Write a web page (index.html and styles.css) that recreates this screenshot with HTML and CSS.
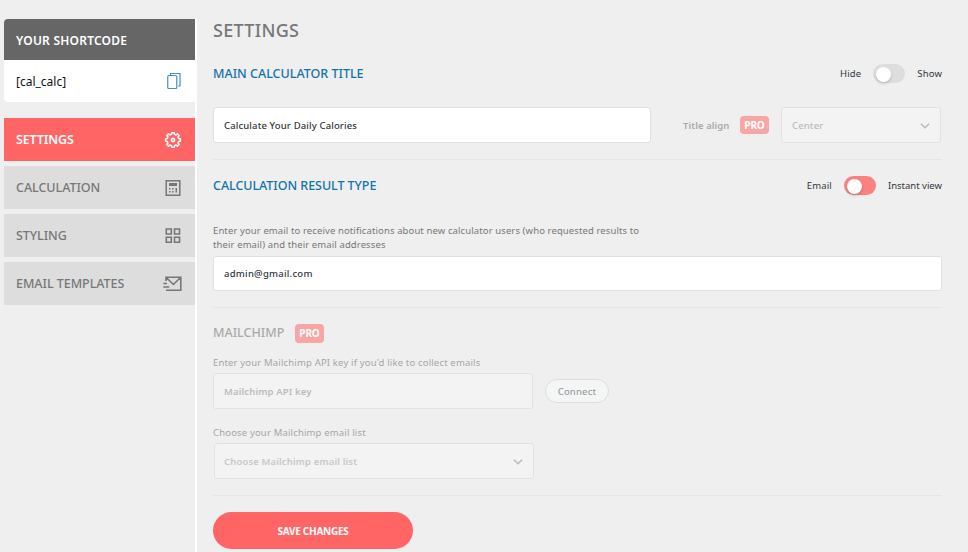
FILE: index.html
```html
<!DOCTYPE html>
<html lang="en">
<head>
<meta charset="utf-8">
<title>Settings</title>
<link rel="stylesheet" href="styles.css">
</head>
<body>
<div class="page">
  <aside class="sidebar">
    <section class="shortcode">
      <h2 class="shortcode-title"><span>YOUR SHORTCODE</span></h2>
      <div class="shortcode-body">
        <span>[cal_calc]</span>
        <svg width="14" height="18" viewBox="0 0 14 18" fill="none" stroke="#4a8cc8" stroke-width="1.200"><path d="M3.500 3V1.500h9.500v12.500h-2"/><rect x=".75" y="3.500" width="9" height="13" rx="1"/></svg>
      </div>
    </section>
    <nav class="nav">
      <a class="nav-item active"><span>SETTINGS</span>
        <svg width="18" height="18" viewBox="-9 -9 18 18" fill="none" stroke="currentColor" stroke-width="1.600" stroke-linejoin="round"><path d="M-1.170-7.300 1.170-7.300 1.550-5.700 3-5.100 4.410-6.070 6.070-4.410 5.100-3 5.700-1.550 7.300-1.170 7.300 1.170 5.700 1.550 5.100 3 6.070 4.410 4.410 6.070 3 5.100 1.550 5.700 1.170 7.300-1.170 7.300-1.550 5.700-3 5.100-4.410 6.070-6.070 4.410-5.100 3-5.700 1.550-7.300 1.170-7.300-1.170-5.700-1.550-5.100-3-6.070-4.410-4.410-6.070-3-5.100-1.550-5.700z"/><circle r="1.600"/></svg></a>
      <a class="nav-item"><span>CALCULATION</span>
        <svg width="18" height="18" viewBox="0 0 18 18" fill="currentColor"><path d="M2.200 1.700h13.600v14.600H2.200z" fill="none" stroke="currentColor" stroke-width="1.500"/><path d="M5 4h8v3H5zM5 9h1.500v1.500H5zM8 9h1.500v1.500H8zM5 12h1.500v1.500H5zM8 12h1.500v1.500H8zM11.500 9H13v4.500h-1.500z"/></svg></a>
      <a class="nav-item"><span>STYLING</span>
        <svg width="18" height="18" viewBox="0 0 18 18" fill="none" stroke="currentColor" stroke-width="1.600"><path d="M2.300 2h5v5h-5zM10.500 2h5v5h-5zM2.300 10.300h5v5h-5zM10.500 10.300h5v5h-5z"/></svg></a>
      <a class="nav-item"><span>EMAIL TEMPLATES</span>
        <svg width="19" height="18" viewBox="0 0 19 18" fill="none" stroke="currentColor" stroke-width="1.600"><path d="M3 6V2.300h14.800v13H3M3 2.300l7.400 7.200 7.400-7.200M.3 8.500H4M.3 12h6"/></svg></a>
    </nav>
  </aside>
  <main class="main">
    <h1 class="title"><span>SETTINGS</span></h1>
    <section class="title-block">
      <div class="head head-first">
        <h2>MAIN CALCULATOR TITLE</h2>
        <div class="switch-row"><span>Hide</span><i class="switch"></i><span>Show</span></div>
      </div>
      <div class="fields">
        <div class="field f-title"><span>Calculate Your Daily Calories</span></div>
        <span class="align-label">Title align</span>
        <b class="pro pro-up">PRO</b>
        <div class="field select off f-center"><span>Center</span><svg width="10" height="7" viewBox="0 0 10 7" fill="none" stroke="#bbb" stroke-width="1.500"><path d="M.9 1.700 5 5.800l4.100-4.100"/></svg></div>
      </div>
    </section>
    <section class="result-block">
      <div class="head head-result">
        <h2 class="h-result">CALCULATION RESULT TYPE</h2>
        <div class="switch-row"><span>Email</span><i class="switch on"></i><span class="instant">Instant view</span></div>
      </div>
      <p class="desc"><span>Enter your email to receive notifications about new calculator users (who requested results to</span><br><span>their email) and their email addresses</span></p>
      <div class="field f-email"><span>admin@gmail.com</span></div>
    </section>
    <section class="chimp-block">
      <div class="chimp-head"><h2 class="h-chimp">MAILCHIMP</h2><b class="pro">PRO</b></div>
      <p class="label"><span>Enter your Mailchimp API key if you'd like to collect emails</span></p>
      <div class="api-row">
        <div class="field off f-api"><span>Mailchimp API key</span></div>
        <span class="connect"><span>Connect</span></span>
      </div>
      <p class="label second"><span>Choose your Mailchimp email list</span></p>
      <div class="field select off f-list"><span>Choose Mailchimp email list</span><svg width="10" height="7" viewBox="0 0 10 7" fill="none" stroke="#bbb" stroke-width="1.500"><path d="M.9 1.700 5 5.800l4.100-4.100"/></svg></div>
    </section>
    <button class="save"><span>SAVE CHANGES</span></button>
  </main>
</div>
</body>
</html>
```
FILE: styles.css
```css
* { box-sizing: border-box; }
body { margin: 0; background: #efefef; font-family: "Noto Sans", "Open Sans", sans-serif; font-size: 9.500px; letter-spacing: .14px; color: #32373c; overflow: hidden; }
h1, h2, p { margin: 0; font-weight: 500; }
span { white-space: nowrap; }
svg { display: block; flex: none; }
.page { display: flex; height: 552px; padding: 19px 0 0 4px; }
.sidebar { width: 191px; flex: none; letter-spacing: 0; }
.shortcode { height: 83px; border-radius: 4px 0 0 4px; overflow: hidden; background: #fff; }
.shortcode-title { height: 41px; display: flex; align-items: center; padding: 1px 12px 0; background: #666; color: #fff; font-size: 12px; font-weight: 600; letter-spacing: .23px; }
.shortcode-body { height: 42px; display: flex; align-items: center; justify-content: space-between; padding: 0 14px 0 12px; color: #111; font-size: 12px; }
.nav { display: flex; flex-direction: column; gap: 5px; margin-top: 16px; }
.nav-item { height: 43px; display: flex; align-items: center; justify-content: space-between; padding: 0 13px 0 12px; background: #ddd; color: #777; font-size: 12.500px; font-weight: 500; letter-spacing: -.04px; }
.nav-item.active { background: #ff6565; color: #fff; font-weight: 600; letter-spacing: -.15px; }
.main { flex: none; width: 747px; border-left: 2px solid #fff; padding-left: 16px; }
.title { height: 23px; display: flex; align-items: center; font-size: 18px; color: #777; line-height: 23px; letter-spacing: .3px; }
.title-block { height: 118px; padding-top: 19px; border-bottom: 1px solid #e5e5e5; }
.head { display: flex; justify-content: space-between; align-items: center; }
.head-first { height: 25px; }
.head h2 { font-size: 12.500px; color: #1273aa; letter-spacing: 0; }
.head .h-result { letter-spacing: -.05px; }
.switch-row { display: flex; align-items: center; gap: 12px; }
.instant { letter-spacing: 0; }
.switch { width: 32px; height: 19px; border-radius: 10px; background: #ddd; padding: 3px; }
.switch::before { content: ""; display: block; width: 15px; height: 15px; margin-top: -.5px; border-radius: 50%; background: #fff; box-shadow: 0 2px 3px rgba(0,0,0,.15); }
.switch.on { background: #fb8080; }
.fields { display: flex; align-items: center; margin-top: 21px; }
.field { height: 36px; display: flex; align-items: center; padding: 0 10px; border: 1px solid #e0e0e0; border-radius: 3px; background: #fff; font-weight: 500; }
.off { background: #f3f3f3; color: #bbb; font-weight: 600; border-color: #e2e2e2; }
.select { justify-content: space-between; }
.f-title { width: 438px; }
.align-label { width: 57px; margin-left: 32px; color: #aaa; font-weight: 600; letter-spacing: .08px; }
.pro { width: 29px; height: 19px; border-radius: 4px; background: #f7a5a5; color: #fff; font-size: 10px; font-weight: 700; line-height: 19px; text-align: center; letter-spacing: -.1px; }
.pro-up { height: 18px; line-height: 18px; }
.f-center { width: 160px; margin-left: 12px; font-weight: 500; }
.result-block { height: 148px; border-bottom: 1px solid #e5e5e5; }
.head-result { height: 51px; }
.desc { height: 29px; margin-top: 13px; color: #777; line-height: 14px; font-weight: 400; letter-spacing: .11px; }
.f-email { height: 35px; margin-top: 3px; letter-spacing: .25px; }
.chimp-block { height: 188px; border-bottom: 1px solid #e5e5e5; padding-top: 16px; }
.chimp-head { display: flex; align-items: center; height: 19px; }
.h-chimp { width: 82px; margin-top: -2px; font-size: 12.500px; color: #aaa; letter-spacing: 0; }
.label { height: 14px; margin-top: 13px; line-height: 14px; color: #a6a6a6; font-weight: 400; letter-spacing: .17px; }
.api-row { display: flex; align-items: center; margin-top: 3px; }
.f-api { width: 320px; }
.connect { width: 64px; height: 24px; margin: 0 0 1px 12px; padding-top: 1px; display: flex; align-items: center; justify-content: center; border: 1px solid #ddd; border-radius: 12px; background: #f4f6f6; color: #9aa0a5; font-weight: 500; }
.second { margin-top: 17px; }
.f-list { width: 320px; margin: 3px 0 0 1px; padding-left: 9px; color: #c8c8c8; }
.save { display: block; width: 200px; height: 37px; margin-top: 16px; padding: 0; border: 0; border-radius: 19px; background: #ff6565; color: #fff; font: 700 10px "Noto Sans", sans-serif; letter-spacing: -.25px; }
```
